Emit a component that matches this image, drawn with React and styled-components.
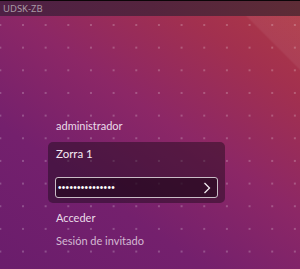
import React from 'react';
import styled, { createGlobalStyle } from 'styled-components';

const GlobalStyle = createGlobalStyle`
  html, body {
    margin: 0;
    padding: 0;
    width: 300px;
    height: 269px;
    overflow: hidden;
  }
  body {
    font-family: Lato, "Noto Sans", sans-serif;
  }
`;

const Screen = styled.div`
  width: 300px;
  height: 269px;
  display: flex;
  flex-direction: column;
  background:
    radial-gradient(circle at 1px 1px, rgba(255, 255, 255, 0.22) 0.7px, transparent 1.2px) 22px 24px / 22.67px 22.67px,
    linear-gradient(225deg, rgba(255, 255, 255, 0.06) 0%, rgba(255, 255, 255, 0.06) 12%, transparent 12.5%),
    linear-gradient(35deg, #6a1d6c 0%, #74206d 30%, #8c2766 55%, #a2304f 80%, #b03a44 100%);
`;

const TopBar = styled.div`
  height: 15px;
  border-top: 1px solid #0c0508;
  background: linear-gradient(90deg, #4e2045 0%, #55243e 50%, #5e2c36 100%);
  display: flex;
  align-items: center;
  padding-left: 3px;
  color: #a99aa5;
  font-family: "Noto Sans", sans-serif;
  font-size: 9.5px;
`;

const Greeter = styled.div`
  display: flex;
  flex-direction: column;
  padding: 103px 0 0 48px;
`;

const Entry = styled.div`
  height: 14px;
  line-height: 14px;
  padding-left: 8px;
  font-size: 11px;
  color: ${(p) => (p.$dim ? '#d3b9d2' : '#eadbe8')};
  margin-bottom: ${(p) => p.$gap || 0}px;
`;

const Card = styled.div`
  width: 177px;
  height: 61px;
  box-sizing: border-box;
  border-radius: 5px;
  background: rgba(25, 8, 22, 0.45);
  padding: 4px 7px 5px 7px;
  display: flex;
  flex-direction: column;
  justify-content: space-between;
  margin-bottom: 8px;
`;

const Name = styled.div`
  font-size: 11.5px;
  line-height: 15px;
  color: #f4eaf2;
  padding-left: 1px;
`;

const Field = styled.div`
  height: 21px;
  box-sizing: border-box;
  border: 1px solid #c9bcc6;
  border-radius: 3px;
  background: rgba(30, 6, 24, 0.55);
  display: flex;
  align-items: center;
  justify-content: space-between;
  padding: 0 6px 0 2px;
`;

const Dots = styled.span`
  color: #ffffff;
  font-family: "Liberation Sans", sans-serif;
  font-size: 10px;
  letter-spacing: 0.3px;
  line-height: 1;
`;

const App = () => (
  <Screen>
    <GlobalStyle />
    <TopBar>UDSK-ZB</TopBar>
    <Greeter>
      <Entry $gap={9}>administrador</Entry>
      <Card>
        <Name>Zorra 1</Name>
        <Field>
          <Dots>{'\u2022'.repeat(15)}</Dots>
          <svg width="8" height="12" viewBox="0 0 8 12">
            <path d="M1.5 1 L6.5 6 L1.5 11" fill="none" stroke="#f2eaf0" strokeWidth="1.3" />
          </svg>
        </Field>
      </Card>
      <Entry $gap={9}>Acceder</Entry>
      <Entry $dim>Sesión de invitado</Entry>
    </Greeter>
  </Screen>
);

export default App;
